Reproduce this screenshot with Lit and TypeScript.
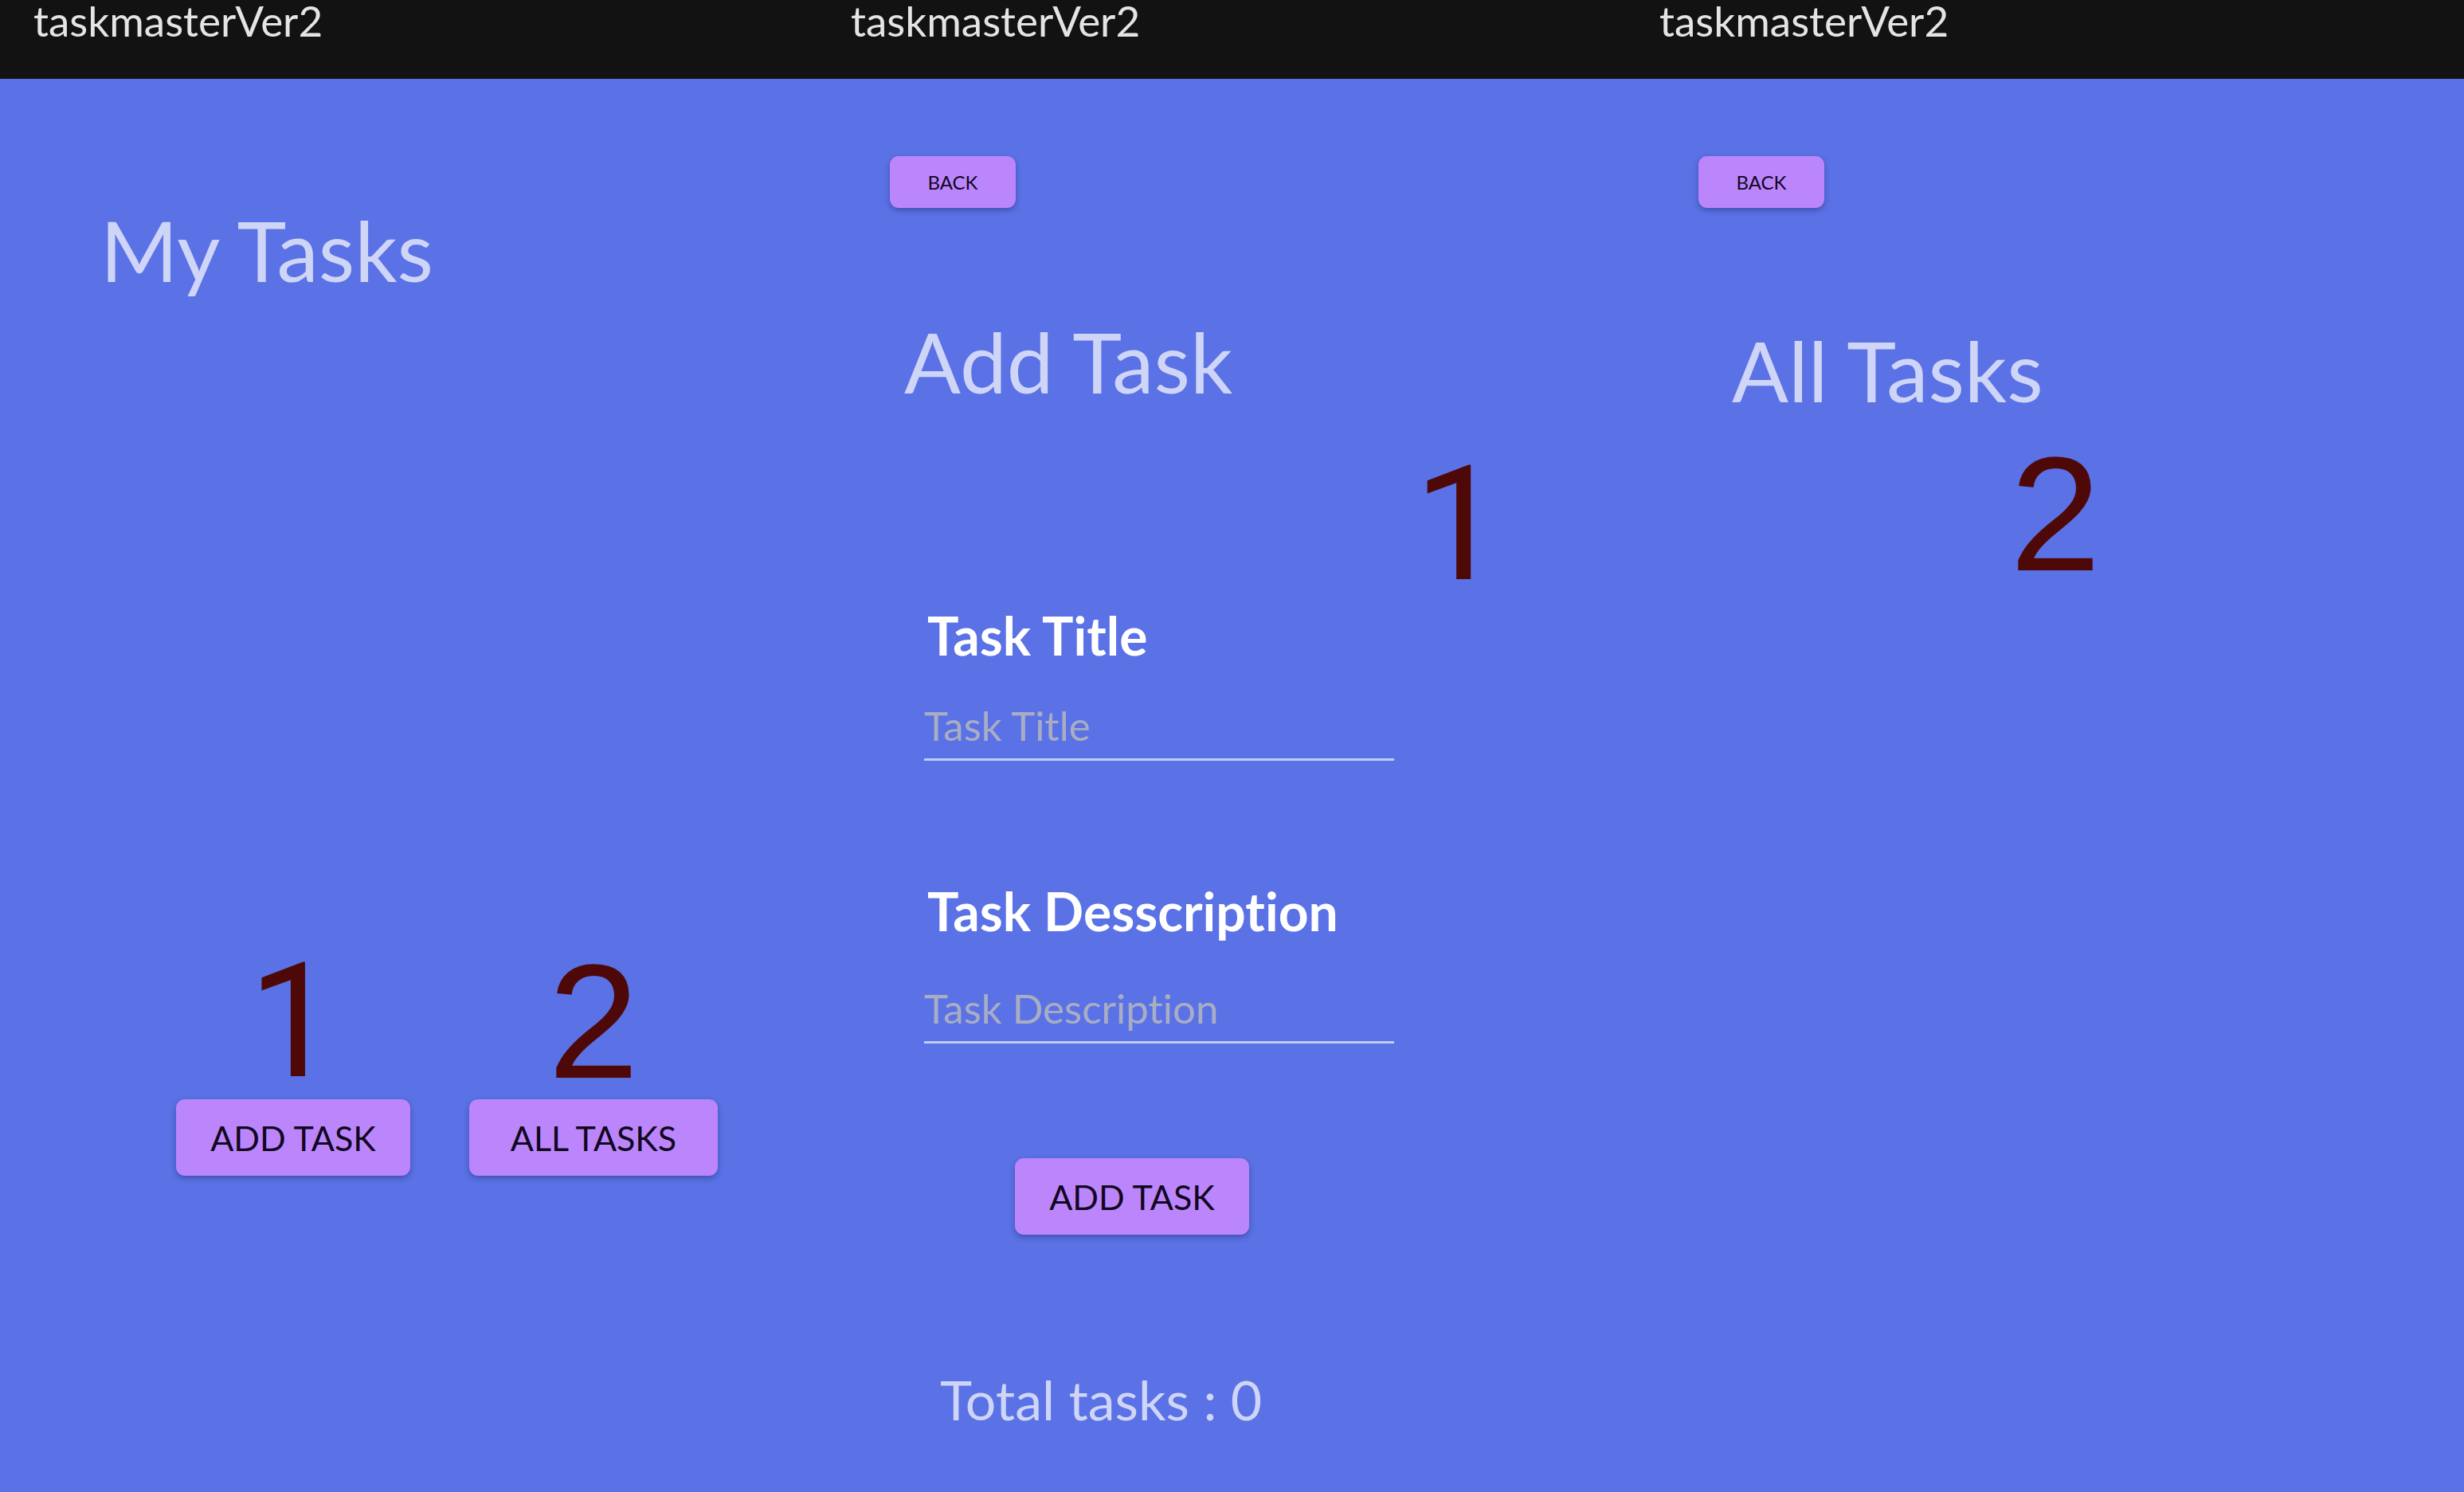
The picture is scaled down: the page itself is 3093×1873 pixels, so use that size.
import { LitElement, html, css } from "lit";
import { customElement, property, state } from "lit/decorators.js";

const theme = css`
  :host {
    display: block;
    font-family: Lato, "Open Sans", sans-serif;
  }
  * {
    box-sizing: border-box;
    font-variant-ligatures: none;
  }
  h1,
  h2,
  p {
    margin: 0;
    font-weight: 400;
  }
  h2 {
    font-size: 105px;
    line-height: 120px;
    color: #ced5f7;
    white-space: nowrap;
  }
  button {
    display: block;
    border: 0;
    padding: 0;
    border-radius: 11px;
    background: #bb86fc;
    color: #12061f;
    font-family: inherit;
    text-transform: uppercase;
    white-space: nowrap;
    box-shadow: 0 3px 7px rgba(30, 40, 110, 0.45);
    cursor: pointer;
  }
  .action {
    height: 96px;
    min-width: 294px;
    padding-top: 2px;
    font-size: 43px;
    line-height: 48px;
  }
  .wide {
    min-width: 312px;
  }
  .back {
    width: 158px;
    height: 65px;
    margin: 97px 0 0 91px;
    font-size: 24px;
    line-height: 28px;
  }
`;

@customElement("step-marker")
class StepMarker extends LitElement {
  @property({ type: Number }) step = 1;

  static styles = css`
    :host {
      display: block;
      width: max-content;
      color: #4f0808;
      font-family: "Liberation Sans", Arial, sans-serif;
      font-size: 205px;
      line-height: 178px;
    }
    .one {
      font-family: Roboto, sans-serif;
      font-size: 200px;
      line-height: 180px;
    }
  `;

  render() {
    return html`<div class=${this.step === 1 ? "one" : "other"}>${this.step}</div>`;
  }
}

@customElement("app-screen")
class AppScreen extends LitElement {
  static styles = [
    theme,
    css`
      .bar {
        height: 99px;
        padding-left: 42px;
        background: #121212;
        color: #e4e4e4;
      }
      .name {
        font-size: 53px;
        line-height: 52px;
      }
    `,
  ];

  render() {
    return html`
      <header class="bar"><h1 class="name">taskmasterVer2</h1></header>
      <slot></slot>
    `;
  }
}

@customElement("home-screen")
class HomeScreen extends LitElement {
  static styles = [
    theme,
    css`
      h2 {
        margin: 154px 0 0 126px;
      }
      .actions {
        display: flex;
        gap: 74px;
        margin: 820px 0 0 221px;
      }
      .choice {
        display: flex;
        flex-direction: column;
        justify-content: space-between;
        align-items: center;
        height: 283px;
      }
    `,
  ];

  render() {
    return html`
      <app-screen>
        <h2>My Tasks</h2>
        <div class="actions">
          <div class="choice">
            <step-marker .step=${1}></step-marker>
            <button class="action" type="button">Add Task</button>
          </div>
          <div class="choice">
            <step-marker .step=${2}></step-marker>
            <button class="action wide" type="button">All Tasks</button>
          </div>
        </div>
      </app-screen>
    `;
  }
}

@customElement("add-task-screen")
class AddTaskScreen extends LitElement {
  @state() private total = 0;

  static styles = [
    theme,
    css`
      h2 {
        margin: 132px 0 0 109px;
      }
      step-marker {
        margin: 56px 0 0 749px;
      }
      form {
        margin-left: 134px;
      }
      label {
        display: block;
        margin: 9px 0 0 4px;
        font-size: 66px;
        line-height: 80px;
        font-weight: 700;
        color: #ffffff;
        white-space: nowrap;
      }
      input {
        display: block;
        width: 67%;
        height: 75px;
        margin: 42px 0 0;
        padding: 0 0 12px;
        border: 0;
        border-bottom: 3px solid #c0cdf8;
        border-radius: 0;
        outline: 0;
        background: transparent;
        color: #ffffff;
        font-family: inherit;
        font-size: 51px;
        line-height: 60px;
      }
      input::placeholder {
        color: #a9adc3;
        opacity: 1;
        font-variant-ligatures: none;
      }
      .second {
        margin-top: 149px;
      }
      .second + input {
        margin-top: 51px;
      }
      .action {
        margin: 144px 0 0 114px;
      }
      .total {
        margin: 167px 0 0 154px;
        font-size: 68px;
        line-height: 80px;
        color: #ced5f7;
        white-space: nowrap;
      }
    `,
  ];

  private add(event: Event) {
    event.preventDefault();
    this.total += 1;
  }

  render() {
    return html`
      <app-screen>
        <button class="back" type="button">Back</button>
        <h2>Add Task</h2>
        <step-marker .step=${1}></step-marker>
        <form @submit=${this.add}>
          <label for="title">Task Title</label>
          <input id="title" type="text" placeholder="Task Title" />
          <label class="second" for="description">Task Desscription</label>
          <input id="description" type="text" placeholder="Task Description" />
          <button class="action" type="submit">Add Task</button>
        </form>
        <p class="total">Total tasks : ${this.total}</p>
      </app-screen>
    `;
  }
}

@customElement("all-tasks-screen")
class AllTasksScreen extends LitElement {
  static styles = [
    theme,
    css`
      h2 {
        margin: 143px 0 0 133px;
      }
      step-marker {
        margin: 32px 0 0 482px;
      }
    `,
  ];

  render() {
    return html`
      <app-screen>
        <button class="back" type="button">Back</button>
        <h2>All Tasks</h2>
        <step-marker .step=${2}></step-marker>
      </app-screen>
    `;
  }
}

@customElement("app-root")
class AppRoot extends LitElement {
  static styles = css`
    :host {
      display: grid;
      grid-template-columns: 1026fr 1015fr 1052fr;
      min-height: 100vh;
      background: #5a72e5;
    }
  `;

  render() {
    return html`
      <home-screen></home-screen>
      <add-task-screen></add-task-screen>
      <all-tasks-screen></all-tasks-screen>
    `;
  }
}
